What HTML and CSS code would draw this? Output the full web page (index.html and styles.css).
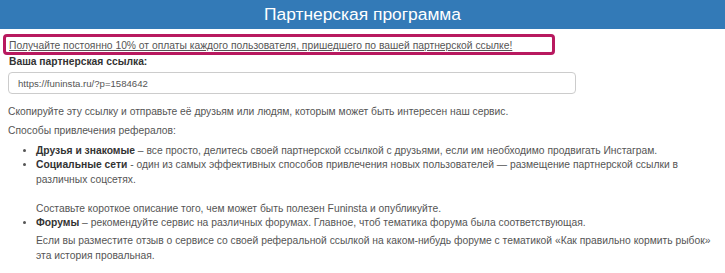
FILE: index.html
```html
<!DOCTYPE html>
<html lang="ru">

<head>
    <meta charset="UTF-8">
    <meta name="viewport" content="width=device-width, initial-scale=1.0">
    <title>Партнерская программа</title>
    <link rel="stylesheet" href="styles.css">
</head>

<body>
    <header class="page-header">
        <h1>Партнерская программа</h1>
    </header>

    <section class="partner">
        <div class="partner-alert">
            <a href="#">Получайте постоянно 10% от оплаты каждого пользователя, пришедшего по вашей партнерской ссылке!</a>
        </div>

        <label class="partner-label" for="refLink">Ваша партнерская ссылка:</label>
        <input id="refLink" class="partner-input" type="text" value="https://funinsta.ru/?p=1584642" readonly>

        <p class="copy-note">Скопируйте эту ссылку и отправьте её друзьям или людям, которым может быть интересен наш сервис.</p>
        <p class="ways-title">Способы привлечения рефералов:</p>

        <ul class="ways">
            <li><b>Друзья и знакомые</b> – все просто, делитесь своей партнерской ссылкой с друзьями, если им необходимо продвигать Инстаграм.</li>
            <li><b>Социальные сети</b> - один из самых эффективных способов привлечения новых пользователей — размещение партнерской ссылки в различных соцсетях.<br><br>Составьте короткое описание того, чем может быть полезен Funinsta и опубликуйте.</li>
            <li><b>Форумы</b> – рекомендуйте сервис на различных форумах. Главное, чтоб тематика форума была соответствующая.
                <div class="ways-note">Если вы разместите отзыв о сервисе со своей реферальной ссылкой на каком-нибудь форуме с тематикой «Как правильно кормить рыбок» эта история провальная.</div>
            </li>
        </ul>
    </section>
</body>

</html>
```

FILE: styles.css
```css
/* General styles */
body {
    font-family: 'Liberation Sans', Arial, sans-serif;
    font-size: 10.3px;
    line-height: 14.4px;
    margin: 0;
    padding: 0;
    background-color: #fff;
    color: #555;
}

.page-header {
    background-color: #337ab7;
    height: 29px;
    text-align: center;
}

.page-header h1 {
    margin: 0;
    font-size: 17.4px;
    font-weight: normal;
    line-height: 29px;
    color: #fff;
}

.partner {
    padding: 0 8px 0 8px;
}

.partner-alert {
    box-sizing: border-box;
    width: 552px;
    height: 21px;
    margin: 5px 0 0 -5px;
    padding: 3px 3px 0;
    border: 3px solid #b8195f;
    border-radius: 4px;
    line-height: 12px;
}

.partner-alert a {
    color: #555;
    text-decoration: underline;
}

.partner-label {
    display: block;
    margin-left: 1px;
    line-height: 14px;
    font-weight: bold;
    color: #333;
}

.partner-input {
    display: block;
    box-sizing: border-box;
    width: 568px;
    height: 22px;
    margin-top: 3px;
    padding: 0 9px;
    border: 1px solid #ccc;
    border-radius: 4px;
    font-family: 'Liberation Sans', Arial, sans-serif;
    font-size: 9.6px;
    color: #555;
    outline: none;
}

.copy-note {
    margin: 11px 0 0;
    line-height: 14px;
}

.ways-title {
    margin: 5px 0 0;
    line-height: 14px;
}

.ways {
    margin: 6px 0 0;
    padding-left: 28px;
}

.ways b {
    color: #333;
}

.ways-note {
    margin-top: 4px;
}
```
